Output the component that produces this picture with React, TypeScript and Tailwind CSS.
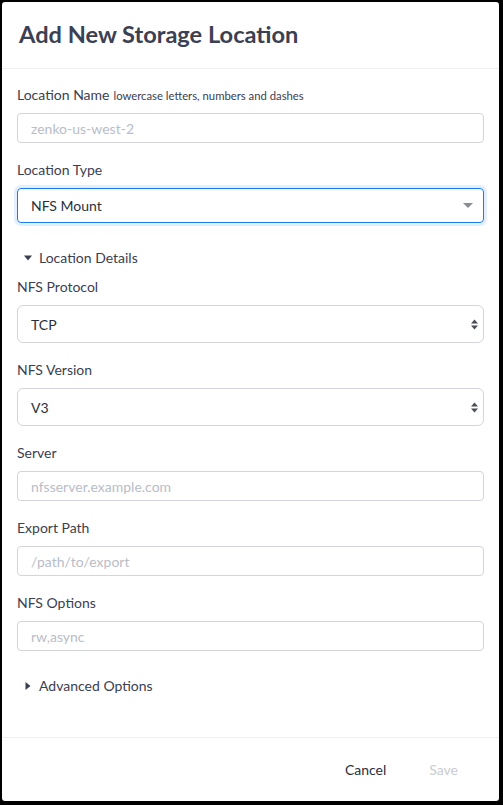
const font = { fontFamily: 'Lato, "Noto Sans", sans-serif' };

function Label({ text, hint }: { text: string; hint?: string }) {
  return (
    <div className="h-5 leading-5 mb-[8px] text-[14px] text-[#3b4050]">
      {text}
      {hint && <span className="ml-[4px] text-[11.3px]">{hint}</span>}
    </div>
  );
}

function TextInput({ placeholder }: { placeholder: string }) {
  return (
    <div className="h-[30px] border border-[#d3d5da] rounded-[4px] px-[13px] flex items-center text-[14px] text-[#b9bdc7]">
      {placeholder}
    </div>
  );
}

function Stepper() {
  return (
    <svg width="7" height="11" viewBox="0 0 7 11" className="text-[#4a4d55]">
      <path d="M3.5 0.5 L7 4.5 H0 Z" fill="currentColor" />
      <path d="M3.5 10.5 L7 6.5 H0 Z" fill="currentColor" />
    </svg>
  );
}

function NativeSelect({ value }: { value: string }) {
  return (
    <div className="h-[38px] border border-[#d3d5da] rounded-[6px] pl-[13px] pr-[5px] flex items-center justify-between text-[14px] text-[#2b2f3a]">
      <span>{value}</span>
      <Stepper />
    </div>
  );
}

function Disclosure({ open, text }: { open: boolean; text: string }) {
  return (
    <div className="h-5 leading-5 flex items-center text-[14px] text-[#3b4050] pl-[7px]">
      <svg width="8" height="8" viewBox="0 0 8 8" className="mr-[7px]">
        {open ? <path d="M0 1.5 H8 L4 6.5 Z" fill="#3b4050" /> : <path d="M1.5 0 V8 L6.5 4 Z" fill="#3b4050" />}
      </svg>
      {text}
    </div>
  );
}

export default function App() {
  return (
    <div className="bg-black min-h-[805px] pt-[2px] pl-[2px] pr-[4px] pb-[4px]" style={font}>
      <div className="bg-white rounded-[3px] h-[799px] flex flex-col">
        <div className="h-[67px] border-b border-[#eeeff1] flex items-center pl-[17px]">
          <h1 className="text-[23.6px] font-bold text-[#3b4052]">Add New Storage Location</h1>
        </div>

        <div className="flex-1 px-[15px] pt-[16px]">
          <Label text="Location Name" hint="lowercase letters, numbers and dashes" />
          <TextInput placeholder="zenko-us-west-2" />

          <div className="mt-[17px]">
            <Label text="Location Type" />
            <div className="h-[35px] border border-[#1a7bf2] rounded-[4px] ring-[3px] ring-[#e3efff] pl-[13px] pr-[10px] flex items-center justify-between text-[14px] text-[#2b2f3a]">
              <span>NFS Mount</span>
              <svg width="10" height="5" viewBox="0 0 10 5">
                <path d="M0 0 H10 L5 5 Z" fill="#8a8d94" />
              </svg>
            </div>
          </div>

          <div className="mt-[25px]">
            <Disclosure open text="Location Details" />
          </div>

          <div className="mt-[9px]">
            <Label text="NFS Protocol" />
            <NativeSelect value="TCP" />
          </div>
          <div className="mt-[17px]">
            <Label text="NFS Version" />
            <NativeSelect value="V3" />
          </div>
          <div className="mt-[17px]">
            <Label text="Server" />
            <TextInput placeholder="nfsserver.example.com" />
          </div>
          <div className="mt-[17px]">
            <Label text="Export Path" />
            <TextInput placeholder="/path/to/export" />
          </div>
          <div className="mt-[17px]">
            <Label text="NFS Options" />
            <TextInput placeholder="rw,async" />
          </div>

          <div className="mt-[25px]">
            <Disclosure open={false} text="Advanced Options" />
          </div>
        </div>

        <div className="h-[64px] border-t border-[#eeeff1] flex items-center justify-end pr-[25px] gap-[11px] text-[14px]">
          <button className="px-4 h-8 text-[#2b2f3a]">Cancel</button>
          <button className="px-4 h-8 text-[#c9ccd2]" disabled>
            Save
          </button>
        </div>
      </div>
    </div>
  );
}
